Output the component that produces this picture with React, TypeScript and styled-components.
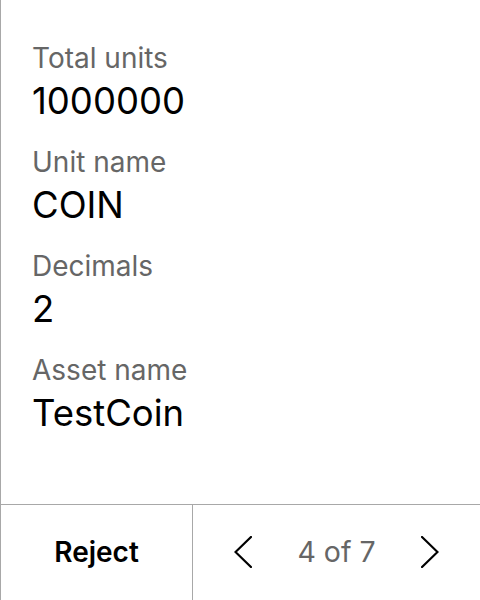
import React from "react";
import styled, { createGlobalStyle } from "styled-components";

const Global = createGlobalStyle`
  html, body { margin: 0; padding: 0; background: #fff; }
  body { font-family: Inter, "Noto Sans", sans-serif; }
  * { box-sizing: border-box; }
`;

const Screen = styled.div`
  width: 480px;
  height: 600px;
  border-left: 1px solid #a8a8a8;
  display: flex;
  flex-direction: column;
  background: #fff;
`;

const Content = styled.div`
  flex: 1;
  padding: 41px 0 0 31px;
  display: flex;
  flex-direction: column;
`;

const Field = styled.div`
  display: flex;
  flex-direction: column;
  height: 104px;
`;

const Label = styled.div`
  font-size: 28px;
  line-height: 34px;
  color: #666;
`;

const Value = styled.div`
  font-size: 36.5px;
  line-height: 52px;
  color: #000;
`;

const Footer = styled.div`
  height: 96px;
  border-top: 1px solid #a8a8a8;
  display: flex;
`;

const RejectButton = styled.button`
  width: 192px;
  border: none;
  border-right: 1px solid #a8a8a8;
  background: transparent;
  font-family: Inter, sans-serif;
  font-weight: 600;
  font-size: 28px;
  color: #000;
  padding: 0 0 2px 0;
`;

const Pager = styled.div`
  flex: 1;
  display: flex;
  align-items: center;
  justify-content: space-between;
  padding: 0 41px 2px 41px;
`;

const NavButton = styled.button`
  border: none;
  background: transparent;
  padding: 0;
  display: flex;
  align-items: center;
  justify-content: center;
`;

const PageText = styled.span`
  font-size: 28.5px;
  color: #666;
`;

const Chevron = ({ dir }: { dir: "left" | "right" }) => (
  <svg width="18" height="32" viewBox="0 0 18 32" fill="none">
    <path
      d={dir === "left" ? "M17 1 L1.5 16 L17 31" : "M1 1 L16.5 16 L1 31"}
      stroke="#000"
      strokeWidth="2.2"
      strokeLinecap="square"
      strokeLinejoin="miter"
    />
  </svg>
);

const fields = [
  { label: "Total units", value: "1000000" },
  { label: "Unit name", value: "COIN" },
  { label: "Decimals", value: "2" },
  { label: "Asset name", value: "TestCoin" },
];

export default function App() {
  return (
    <>
      <Global />
      <Screen>
        <Content>
          {fields.map((f) => (
            <Field key={f.label}>
              <Label>{f.label}</Label>
              <Value>{f.value}</Value>
            </Field>
          ))}
        </Content>
        <Footer>
          <RejectButton>Reject</RejectButton>
          <Pager>
            <NavButton aria-label="Previous">
              <Chevron dir="left" />
            </NavButton>
            <PageText>4 of 7</PageText>
            <NavButton aria-label="Next">
              <Chevron dir="right" />
            </NavButton>
          </Pager>
        </Footer>
      </Screen>
    </>
  );
}
